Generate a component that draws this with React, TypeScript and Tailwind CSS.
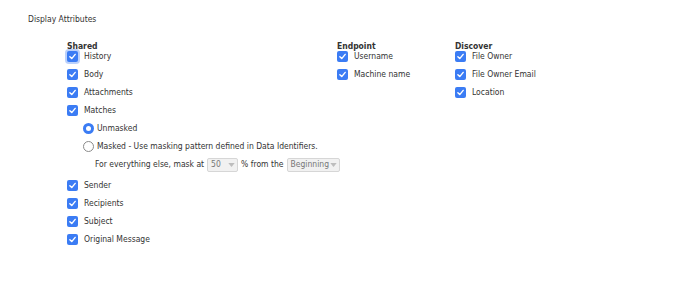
import React from "react";

const FONT = { fontFamily: '"DejaVu Sans Condensed", "DejaVu Sans", Verdana, sans-serif' };

function Check({ focus = false }: { focus?: boolean }) {
  return (
    <span
      className={`flex h-[11px] w-[11px] shrink-0 items-center justify-center rounded-[2px] bg-[#3b7cf4] ${
        focus ? "shadow-[0_0_0_2px_rgba(59,124,244,0.35)]" : ""
      }`}
    >
      <svg viewBox="0 0 12 12" className="h-[9px] w-[9px]">
        <path d="M2.5 6.3 L5 8.8 L9.6 3.2" fill="none" stroke="#fff" strokeWidth="1.9" strokeLinecap="round" strokeLinejoin="round" />
      </svg>
    </span>
  );
}

function CheckRow({ label, focus }: { label: string; focus?: boolean }) {
  return (
    <div className="flex h-[18px] items-center gap-[6px] whitespace-nowrap">
      <Check focus={focus} />
      <span>{label}</span>
    </div>
  );
}

function Radio({ checked }: { checked?: boolean }) {
  return checked ? (
    <span className="flex h-[11px] w-[11px] shrink-0 items-center justify-center rounded-full bg-[#3b7cf4]">
      <span className="h-[5px] w-[5px] rounded-full bg-white" />
    </span>
  ) : (
    <span className="h-[11px] w-[11px] shrink-0 rounded-full border border-[#8a8a8a] bg-white" />
  );
}

function Select({ value, width }: { value: string; width: string }) {
  return (
    <span
      className={`inline-flex h-[14px] shrink-0 items-center justify-between rounded-[2px] border border-[#d6d6d6] bg-[#f1f1f1] pl-[3px] pr-[2px] text-[#777] ${width}`}
    >
      <span>{value}</span>
      <svg viewBox="0 0 8 5" className="h-[4px] w-[7px]">
        <path d="M0 0 L8 0 L4 5 Z" fill="#bdbdbd" />
      </svg>
    </span>
  );
}

export default function App() {
  return (
    <div className="h-[300px] w-[677px] bg-white text-[8.5px] text-[#333]" style={FONT}>
      <div className="pl-[28px] pt-[13px]">Display Attributes</div>

      <div className="flex pl-[67px] pt-[15px]">
        {/* Shared */}
        <div className="w-[270px] shrink-0">
          <div className="h-[7px] font-bold leading-[10px] text-[#333]">Shared</div>
          <CheckRow label="History" focus />
          <CheckRow label="Body" />
          <CheckRow label="Attachments" />
          <CheckRow label="Matches" />

          <div className="pl-[16px]">
            <div className="flex h-[18px] items-center gap-[3px] whitespace-nowrap">
              <Radio checked />
              <span>Unmasked</span>
            </div>
            <div className="flex h-[18px] items-center gap-[3px] whitespace-nowrap">
              <Radio />
              <span>Masked - Use masking pattern defined in Data Identifiers.</span>
            </div>
            <div className="flex h-[18px] items-center gap-[3px] whitespace-nowrap pl-[12px]">
              <span>For everything else, mask at</span>
              <Select value="50" width="w-[31px]" />
              <span>% from the</span>
              <Select value="Beginning" width="w-[53px]" />
            </div>
          </div>

          <div className="pt-[3px]">
            <CheckRow label="Sender" />
            <CheckRow label="Recipients" />
            <CheckRow label="Subject" />
            <CheckRow label="Original Message" />
          </div>
        </div>

        {/* Endpoint */}
        <div className="w-[118px] shrink-0">
          <div className="h-[7px] font-bold leading-[10px]">Endpoint</div>
          <CheckRow label="Username" />
          <CheckRow label="Machine name" />
        </div>

        {/* Discover */}
        <div>
          <div className="h-[7px] font-bold leading-[10px]">Discover</div>
          <CheckRow label="File Owner" />
          <CheckRow label="File Owner Email" />
          <CheckRow label="Location" />
        </div>
      </div>
    </div>
  );
}
